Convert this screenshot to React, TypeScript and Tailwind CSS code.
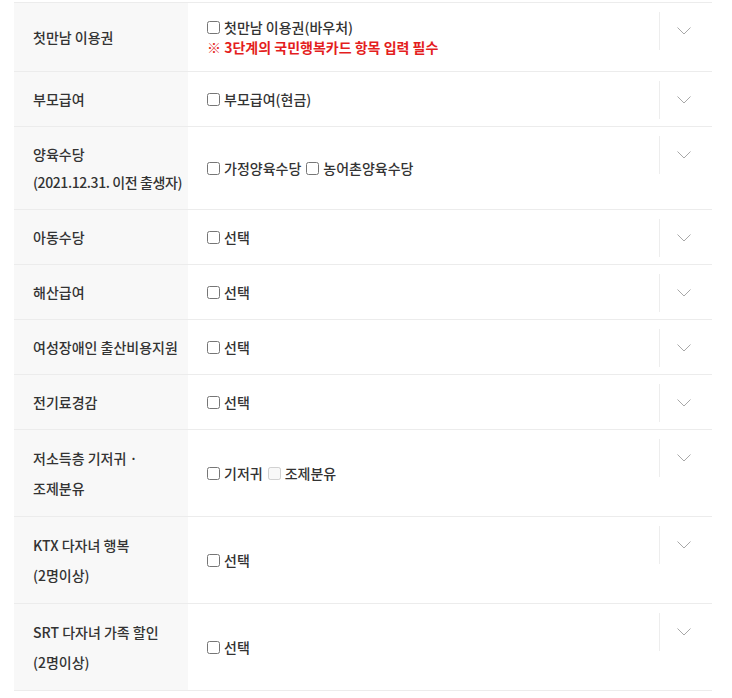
const rows: {
  label: string[];
  leading?: string;
  options: { text: string; disabled?: boolean }[];
  note?: string;
}[] = [
  { label: ["첫만남 이용권"], options: [{ text: "첫만남 이용권(바우처)" }], note: "※ 3단계의 국민행복카드 항목 입력 필수" },
  { label: ["부모급여"], options: [{ text: "부모급여(현금)" }] },
  { label: ["양육수당", "(2021.12.31. 이전 출생자)"], options: [{ text: "가정양육수당" }, { text: "농어촌양육수당" }] },
  { label: ["아동수당"], options: [{ text: "선택" }] },
  { label: ["해산급여"], options: [{ text: "선택" }] },
  { label: ["여성장애인 출산비용지원"], options: [{ text: "선택" }] },
  { label: ["전기료경감"], options: [{ text: "선택" }] },
  { label: ["저소득층 기저귀 ·", "조제분유"], leading: "leading-[30px]", options: [{ text: "기저귀" }, { text: "조제분유", disabled: true }] },
  { label: ["KTX 다자녀 행복", "(2명이상)"], leading: "leading-[30px]", options: [{ text: "선택" }] },
  { label: ["SRT 다자녀 가족 할인", "(2명이상)"], leading: "leading-[30px]", options: [{ text: "선택" }] },
];

function Chevron() {
  return (
    <svg width="14" height="8" viewBox="0 0 14 8" fill="none">
      <path d="M0.5 0.5 L7 7 L13.5 0.5" stroke="#a8a8a8" strokeWidth="1" />
    </svg>
  );
}

export default function App() {
  return (
    <div
      className="min-h-[698px] bg-white pt-[2px] text-[14px] font-medium text-[#333]"
      style={{ fontFamily: '"Noto Sans CJK KR", "Noto Sans", sans-serif' }}
    >
      <div className="ml-[14px] w-[698px] border-t border-[#ececec]">
        {rows.map((row, i) => (
          <div key={i} className="grid grid-cols-[174px_471px_53px] border-b border-[#ececec]">
            {/* label */}
            <div className={`flex flex-col justify-center bg-[#f8f8f8] py-[13px] pl-[19px] ${row.leading ?? "leading-[28px]"}`}>
              {row.label.map((l, j) => (
                <div key={j} className={l.startsWith("(2021") ? "whitespace-nowrap tracking-[-0.4px]" : "whitespace-nowrap"}>
                  {l}
                </div>
              ))}
            </div>

            {/* options */}
            <div className="flex flex-col justify-center py-[14px] pl-[19px] leading-[20px]">
              <div className="flex items-center">
                {row.options.map((o, j) => (
                  <label key={j} className="mr-[5px] flex items-center">
                    <input type="checkbox" disabled={o.disabled} className="m-0 mr-[4px] h-[13px] w-[13px]" />
                    <span>{o.text}</span>
                  </label>
                ))}
              </div>
              {row.note && <div className="font-bold text-[#e41e1e]">{row.note}</div>}
            </div>

            {/* toggle */}
            <div className="pt-[9px]">
              <div className="flex h-[38px] items-center border-l border-[#ededed] pl-[17px]">
                <Chevron />
              </div>
            </div>
          </div>
        ))}
      </div>
    </div>
  );
}
